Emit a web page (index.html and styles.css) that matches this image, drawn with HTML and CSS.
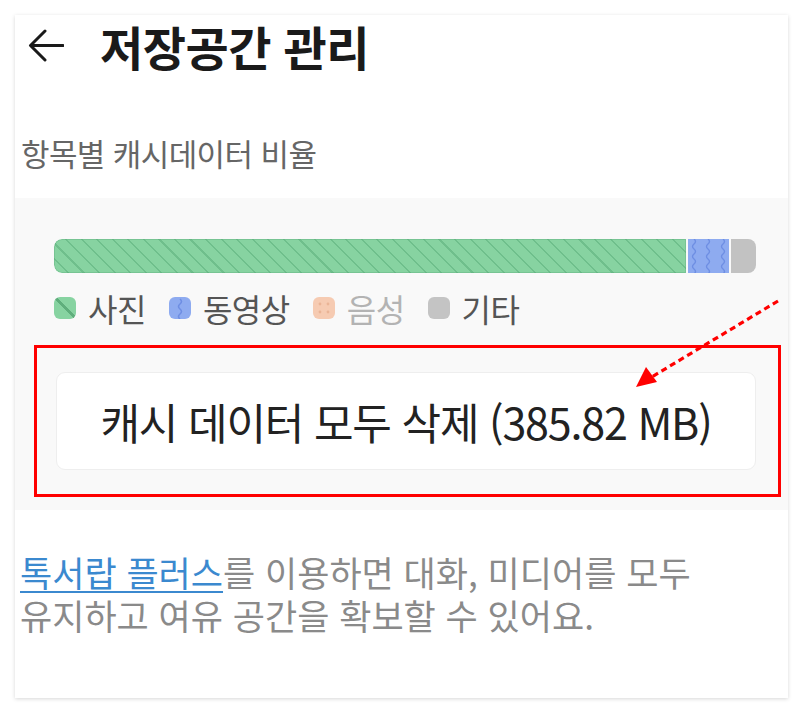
FILE: index.html
```html
<!DOCTYPE html>
<html lang="ko">
<head>
<meta charset="utf-8">
<title>저장공간 관리</title>
<link rel="stylesheet" href="styles.css">
</head>
<body>
<div class="card">
  <header class="header">
    <svg class="back" width="36" height="34" viewBox="0 0 36 34">
      <path d="M35 16.5H3M17 2L2.5 16.5L17 31" fill="none" stroke="#1a1a1a" stroke-width="3" stroke-linecap="round" stroke-linejoin="round"/>
    </svg>
    <h1 class="title">저장공간 관리</h1>
  </header>
  <p class="subtitle">항목별 캐시데이터 비율</p>
  <section class="panel">
    <div class="bar">
      <div class="seg seg-photo"></div>
      <div class="seg seg-video">
        <svg width="41" height="34" viewBox="0 0 41 34">
          <g fill="none" stroke="#6e8ee3" stroke-width="1.4">
            <path d="M6 0q3 2.5 0 5t0 5t0 5t0 5t0 5t0 5t0 5"/>
            <path d="M20 0q3 2.5 0 5t0 5t0 5t0 5t0 5t0 5t0 5"/>
            <path d="M35 0q3 2.5 0 5t0 5t0 5t0 5t0 5t0 5t0 5"/>
          </g>
        </svg>
      </div>
      <div class="seg seg-etc"></div>
    </div>
    <ul class="legend">
      <li class="item"><span class="dot dot-photo"></span><span class="label">사진</span></li>
      <li class="item"><span class="dot dot-video"><svg width="22" height="22" viewBox="0 0 22 22"><path d="M11 2q3 2.5 0 5t0 5t0 5t0 5" fill="none" stroke="#6e8ee3" stroke-width="1.6"/></svg></span><span class="label">동영상</span></li>
      <li class="item item-off"><span class="dot dot-audio"><svg width="22" height="22" viewBox="0 0 22 22"><g fill="#eab496"><circle cx="7" cy="7" r="1.4"/><circle cx="15" cy="7" r="1.4"/><circle cx="7" cy="15" r="1.4"/><circle cx="15" cy="15" r="1.4"/></g></svg></span><span class="label">음성</span></li>
      <li class="item"><span class="dot dot-etc"></span><span class="label">기타</span></li>
    </ul>
    <div class="highlight">
      <button class="clear-btn" type="button">캐시 데이터 모두 삭제 (385.82 MB)</button>
    </div>
  </section>
  <p class="note"><a class="link" href="#">톡서랍 플러스</a>를 이용하면 대화, 미디어를 모두<br>유지하고 여유 공간을 확보할 수 있어요.</p>
  <svg class="pointer" width="160" height="100" viewBox="0 0 160 100">
    <path d="M148 8L20 85" fill="none" stroke="#ff0000" stroke-width="3.2" stroke-dasharray="6 4"/>
    <path d="M6 94L16 74L27 89Z" fill="#ff0000"/>
  </svg>
</div>
</body>
</html>
```

FILE: styles.css
```css
* { box-sizing: border-box; }
html, body { margin: 0; padding: 0; background: #ffffff; }
body {
  font-family: "Noto Sans CJK KR", "Noto Sans", sans-serif;
  width: 804px;
  height: 713px;
  overflow: hidden;
}
.card {
  position: relative;
  margin: 15px 0 0 15px;
  width: 773px;
  height: 683px;
  background: #ffffff;
  box-shadow: 0 1px 4px rgba(0, 0, 0, 0.16);
}
.header {
  display: flex;
  align-items: center;
  height: 66px;
  padding-left: 13px;
}
.back { flex: none; margin-top: -4px; }
.title {
  margin: -6px 0 0 36px;
  font-size: 47px;
  font-weight: 700;
  color: #1a1a1a;
  letter-spacing: -0.5px;
  line-height: 1;
}
.subtitle {
  margin: 52px 0 0 6px;
  font-size: 31px;
  line-height: 40px;
  color: #666666;
  letter-spacing: -0.6px;
}
.panel {
  margin-top: 25px;
  height: 312px;
  background: #f9f9f9;
  padding-top: 41px;
}
.bar {
  display: flex;
  gap: 2px;
  margin-left: 39px;
  width: 702px;
  height: 34px;
  border-radius: 8px;
  overflow: hidden;
}
.seg { height: 100%; }
.seg-photo {
  width: 632px;
  background-color: #87d3a1;
  background-image: repeating-linear-gradient(45deg, #87d3a1 0, #87d3a1 9.5px, #6fbf8c 9.5px, #6fbf8c 11px);
  box-shadow: inset 0 0 0 1px rgba(90, 170, 120, 0.35);
  border-radius: 8px 0 0 8px;
}
.seg-video { width: 41px; background: #8eabf0; }
.seg-video svg { display: block; }
.seg-etc { width: 25px; background: #c2c2c2; }
.legend {
  list-style: none;
  margin: 15px 0 0 39px;
  padding: 0;
  display: flex;
  gap: 23px;
}
.item { display: flex; align-items: center; gap: 12px; }
.dot {
  display: block;
  width: 22px;
  height: 22px;
  border-radius: 6px;
  overflow: hidden;
}
.dot svg { display: block; }
.dot-photo {
  background: #87d3a1 linear-gradient(45deg, transparent 47%, #5fae7c 47%, #5fae7c 55%, transparent 55%);
}
.dot-video { background: #8eabf0; }
.dot-audio { background: #f6cbb2; }
.dot-etc { background: #c4c4c4; }
.label {
  font-size: 32px;
  line-height: 40px;
  color: #555555;
  letter-spacing: -0.5px;
}
.item-off .label { color: #b3b3b3; }
.highlight {
  margin: 17px 7px 0 19px;
  height: 152px;
  border: 3px solid #ff0000;
  padding: 24px 22px 0 19px;
}
.clear-btn {
  display: block;
  width: 100%;
  height: 98px;
  border: 1px solid #eeeeee;
  border-radius: 9px;
  background: #ffffff;
  font-family: "Noto Sans CJK KR", "Noto Sans", sans-serif;
  font-size: 43px;
  color: #222222;
  letter-spacing: -1.2px;
  padding: 0;
}
.note {
  margin: 40px 0 0 5px;
  font-size: 35px;
  line-height: 43px;
  color: #8a8a8a;
  letter-spacing: 0;
}
.link {
  color: #3b89cf;
  text-decoration: underline;
  text-decoration-thickness: 2px;
  text-underline-offset: 4px;
}
.pointer {
  position: absolute;
  left: 615px;
  top: 278px;
}
```
